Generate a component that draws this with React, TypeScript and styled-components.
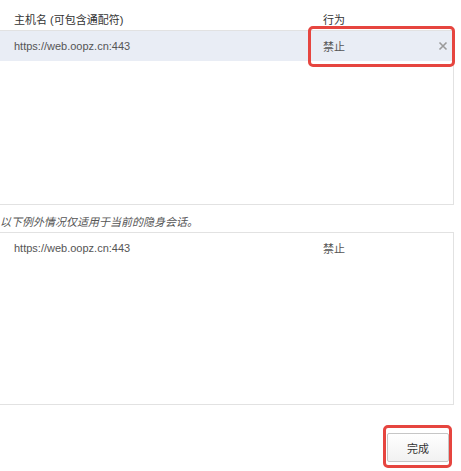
import React from "react";
import styled, { createGlobalStyle } from "styled-components";

const Global = createGlobalStyle`
  html, body { margin: 0; padding: 0; background: #fff; overflow: hidden; }
  body { font-family: "Liberation Sans", "Noto Sans CJK SC", sans-serif; font-size: 11px; color: #333; }
`;

const Page = styled.div`
  width: 461px;
  height: 471px;
  padding-top: 13px;
  box-sizing: border-box;
`;

const HeaderRow = styled.div`
  display: grid;
  grid-template-columns: 309px 1fr;
  padding-left: 14px;
  height: 14px;
  line-height: 14px;
  margin-bottom: 3px;
  color: #333;
`;

const ListBox = styled.div<{ $h: number }>`
  margin-left: -10px;
  width: 464px;
  height: ${(p) => p.$h}px;
  box-sizing: border-box;
  border: 1px solid #e2e2e2;
  background: #fff;
`;

const Row = styled.div<{ $selected?: boolean }>`
  display: grid;
  grid-template-columns: 309px 1fr;
  align-items: center;
  height: 30px;
  padding-left: 23px;
  background: ${(p) => (p.$selected ? "#e9edf5" : "transparent")};
  color: #555;
`;

const ActionCell = styled.div<{ $marked?: boolean }>`
  position: relative;
  display: flex;
  align-items: center;
  justify-content: space-between;
  height: 100%;
  padding-right: 5px;
  ${(p) =>
    p.$marked &&
    `&::after {
      content: "";
      position: absolute;
      top: -5px;
      bottom: -6px;
      left: -15px;
      right: -2px;
      border: 3px solid #e6453f;
      border-radius: 5px;
      pointer-events: none;
    }`}
`;

const Close = styled.svg`
  width: 10px;
  height: 10px;
  display: block;
`;

const Note = styled.div`
  margin-top: 10px;
  margin-bottom: 3px;
  height: 14px;
  line-height: 14px;
  font-style: italic;
  color: #555;
  padding-left: 0;
`;

const Footer = styled.div`
  display: flex;
  justify-content: flex-end;
  padding-top: 28px;
  padding-right: 12px;
`;

const Marked = styled.div`
  position: relative;
  &::after {
    content: "";
    position: absolute;
    top: -8px;
    bottom: -6px;
    left: -4px;
    right: -3px;
    border: 3px solid #e6453f;
    border-radius: 5px;
    pointer-events: none;
  }
`;

const Button = styled.button`
  display: block;
  width: 62px;
  height: 29px;
  border: 1px solid #c6c6c6;
  border-radius: 2px;
  background: linear-gradient(#ffffff, #f1f1f1);
  font-family: "Liberation Sans", "Noto Sans CJK SC", sans-serif;
  font-size: 11px;
  color: #333;
  padding: 0;
`;

export default function App() {
  return (
    <>
      <Global />
      <Page>
        <HeaderRow>
          <span>主机名 (可包含通配符)</span>
          <span>行为</span>
        </HeaderRow>
        <ListBox $h={175}>
          <Row $selected>
            <span>https://web.oopz.cn:443</span>
            <ActionCell $marked>
              <span>禁止</span>
              <Close viewBox="0 0 10 10">
                <path d="M1.5 1.5 L8.5 8.5 M8.5 1.5 L1.5 8.5" stroke="#9a9a9a" strokeWidth="1.6" fill="none" />
              </Close>
            </ActionCell>
          </Row>
        </ListBox>
        <Note>以下例外情况仅适用于当前的隐身会话。</Note>
        <ListBox $h={173}>
          <Row>
            <span>https://web.oopz.cn:443</span>
            <ActionCell>
              <span>禁止</span>
            </ActionCell>
          </Row>
        </ListBox>
        <Footer>
          <Marked>
            <Button>完成</Button>
          </Marked>
        </Footer>
      </Page>
    </>
  );
}
